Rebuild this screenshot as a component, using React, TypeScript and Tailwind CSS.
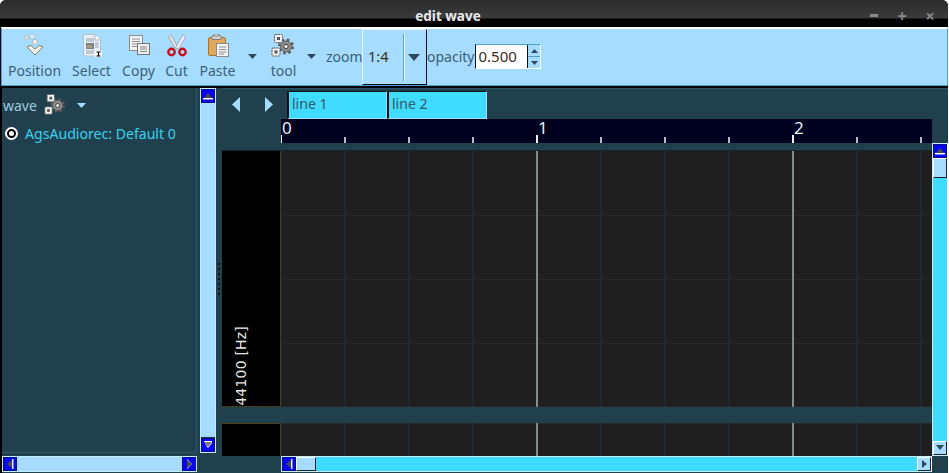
import React from 'react';

const font = { fontFamily: '"Noto Sans", sans-serif' };

function GearsIcon({ size = 24 }: { size?: number }) {
  return (
    <svg width={size} height={size} viewBox="0 0 24 24">
      <circle cx="16" cy="12.5" r="6.5" fill="none" stroke="#5c5c5c" strokeWidth="3" strokeDasharray="2.6 2.5" />
      <circle cx="16" cy="12.5" r="5.5" fill="#8d8d8d" stroke="#606060" />
      <circle cx="16" cy="12.5" r="2.2" fill="#e6e6e6" stroke="#3f3f3f" />
      <rect x="4.5" y="0.5" width="8" height="8" rx="1" fill="#f2f2f2" stroke="#555" strokeDasharray="2 0.8" />
      <rect x="7" y="3" width="3" height="3" fill="#555" />
      <rect x="2" y="14" width="8" height="8" rx="1" fill="#f2f2f2" stroke="#555" strokeDasharray="2 0.8" />
      <rect x="4.5" y="16.5" width="3" height="3" fill="#555" />
    </svg>
  );
}

function PositionIcon() {
  return (
    <svg width="24" height="24" viewBox="0 0 24 24">
      <circle cx="3.5" cy="4" r="2" fill="#e4e4e4" stroke="#a9b4b8" strokeWidth="0.7" />
      <circle cx="9" cy="2.5" r="2.2" fill="#f3f3f3" stroke="#a9b4b8" strokeWidth="0.7" />
      <circle cx="12" cy="8" r="2.6" fill="#eee" stroke="#9aa6aa" strokeWidth="0.7" />
      <path d="M4 13 L8 11.5 L12 15 L16 11.5 L20 13 L12 21 Z" fill="#f2f2ea" stroke="#7b7f70" strokeWidth="1" strokeLinejoin="round" />
    </svg>
  );
}

function SelectIcon() {
  return (
    <svg width="24" height="24" viewBox="0 0 24 24">
      <path d="M3.5 0.5 H15 L20.5 6 V22 H3.5 Z" fill="#eaf0f6" stroke="#b5bfc9" />
      <path d="M15 0.5 V6 H20.5" fill="#fff" stroke="#aab4be" />
      <rect x="6" y="9" width="8" height="6" fill="#77808a" />
      <rect x="7" y="11" width="5" height="3" fill="#a99f7b" />
      <path d="M6 5h8M6 7h8M15 9h3.5M15 11h3.5M15 13h3.5M6 17h8M6 19h8" stroke="#96a1ac" strokeWidth="1" />
      <rect x="15" y="17" width="7" height="6" fill="#fff" />
      <path d="M16.5 18h4M18.5 18v4M16.5 22h4" stroke="#000" strokeWidth="1.2" />
    </svg>
  );
}

function CopyIcon() {
  return (
    <svg width="24" height="24" viewBox="0 0 24 24">
      <rect x="2.5" y="1.5" width="13" height="15" fill="#f4f4f4" stroke="#8b8b8b" />
      <path d="M5 5h8M5 7.5h8M5 10h8M5 12.5h5" stroke="#8e8e8e" />
      <rect x="10.5" y="9.5" width="12" height="11" fill="#eeeeee" stroke="#777" />
      <path d="M13 13h7M13 15h7M13 17.5h7" stroke="#8a8a8a" />
    </svg>
  );
}

function CutIcon() {
  return (
    <svg width="24" height="24" viewBox="0 0 24 24">
      <path d="M6 0.5 L13.5 14 L10.5 15 L3.5 3 Z" fill="#dfe3e5" stroke="#9b9b9b" strokeWidth="0.8" />
      <path d="M18 0.5 L10.5 14 L13.5 15 L20.5 3 Z" fill="#eef0f1" stroke="#9b9b9b" strokeWidth="0.8" />
      <circle cx="6.5" cy="18" r="3.2" fill="none" stroke="#c8101c" strokeWidth="2.4" />
      <circle cx="17.5" cy="18" r="3.2" fill="none" stroke="#c8101c" strokeWidth="2.4" />
    </svg>
  );
}

function PasteIcon() {
  return (
    <svg width="24" height="24" viewBox="0 0 24 24">
      <rect x="2.5" y="3.5" width="17" height="18" rx="1.5" fill="#dfa95e" stroke="#a3752e" />
      <rect x="6" y="1.5" width="9" height="4" rx="1" fill="#d8d8d8" stroke="#777" />
      <rect x="8.5" y="0" width="4" height="2.5" fill="#cfcfcf" stroke="#777" strokeWidth="0.6" />
      <rect x="10.5" y="9.5" width="12" height="13" fill="#f3f3f3" stroke="#8a8a8a" />
      <path d="M13 13h7.5M13 15.5h7.5M13 18h7.5M13 20h5" stroke="#8e8e8e" />
    </svg>
  );
}

// little triangle used by the drop downs and the nav buttons
function Tri({ dir, color, w = 10, h = 6 }: { dir: 'up' | 'down' | 'left' | 'right'; color: string; w?: number; h?: number }) {
  const points = {
    up: `0,${h} ${w},${h} ${w / 2},0`,
    down: `0,0 ${w},0 ${w / 2},${h}`,
    left: `${w},0 ${w},${h} 0,${h / 2}`,
    right: `0,0 0,${h} ${w},${h / 2}`,
  }[dir];
  return (
    <svg width={w} height={h} viewBox={`0 0 ${w} ${h}`} className="block shrink-0">
      <polygon points={points} fill={color} />
    </svg>
  );
}

// scroll arrows have a dark face and a white edge
function ScrollArrow({ dir, light }: { dir: 'up' | 'down' | 'left' | 'right'; light?: boolean }) {
  const face = light ? '#2d4a5c' : '#4a4a4a';
  const horizontal = dir === 'left' || dir === 'right';
  const faces = {
    up: '1,6 9,6 5,1',
    down: '1,1 9,1 5,6',
    left: '6,1 6,9 1,5',
    right: '2,1 2,9 7,5',
  }[dir];
  return (
    <svg width={horizontal ? 8 : 10} height={horizontal ? 10 : 8} viewBox={horizontal ? '0 0 8 10' : '0 0 10 8'} className="block">
      {dir === 'up' && <rect x="0" y="6" width="10" height="1.5" fill="#fff" />}
      {dir === 'down' && !light && <polygon points="1,0 9,0 9,2 5,7 4,6" fill="#fff" />}
      {dir === 'left' && <rect x="6" y="0" width="1.5" height="10" fill="#d8e8f0" />}
      {dir === 'right' && !light && <polygon points="2,0 7,5 2,10" fill="#d8e8f0" />}
      <polygon points={faces} fill={dir === 'down' && !light ? '#777' : face} />
    </svg>
  );
}

function ToolButton({ label, icon, className }: { label: string; icon: React.ReactNode; className: string }) {
  return (
    <div className={`flex flex-col items-center ${className}`}>
      <div className="h-[24px] mt-[5px]">{icon}</div>
      <span className="mt-[3px] text-[14px] leading-[19px] text-[#3d5f74] whitespace-nowrap">{label}</span>
    </div>
  );
}

function ScrollButton({ dir, light }: { dir: 'up' | 'down' | 'left' | 'right'; light?: boolean }) {
  return (
    <div
      className={`flex items-center justify-center shrink-0 w-[14px] h-[14px] ${
        light ? 'bg-[#a6dcff] border border-white border-b-[#222] border-r-[#222]' : 'bg-[#0808f0] border border-[#0a0a8a]'
      }`}
    >
      <ScrollArrow dir={dir} light={light} />
    </div>
  );
}

function RulerTicks() {
  const ticks = Array.from({ length: 11 }, (_, i) => i * 64);
  return (
    <svg width="651" height="8" className="block">
      {ticks.map((x) => (
        <rect key={x} x={x - 1} y={x % 256 === 0 ? 0 : 2} width="2" height={x % 256 === 0 ? 8 : 6} fill={x % 256 === 0 ? '#f0f0f0' : '#b9b9c4'} />
      ))}
    </svg>
  );
}

function WaveGrid({ height, rows }: { height: number; rows: number[] }) {
  const lines = Array.from({ length: 11 }, (_, i) => i * 64);
  return (
    <svg width="651" height={height} className="block bg-[#1f1f1f]">
      {rows.map((y) => (
        <rect key={y} x="0" y={y} width="651" height="1" fill="#282828" />
      ))}
      {lines.map((x) => (
        <rect key={x} x={x - 1} y="0" width="2" height={height} fill={x % 256 === 0 ? (x === 0 ? '#1c2a30' : '#7f8c87') : '#1c2b33'} />
      ))}
    </svg>
  );
}

export default function App() {
  return (
    <div style={font} className="w-[949px] h-[473px] bg-white overflow-hidden">
      <div className="w-[948px] h-[473px] bg-black rounded-t-[6px] overflow-hidden flex flex-col">
        {/* Title bar */}
        <div className="h-[27px] shrink-0 grid grid-cols-[1fr_auto_1fr] bg-[linear-gradient(#2b2b2b_0,#3b3b3b_18px,#000_19px)]">
          <div />
          <span className="mr-[52px] text-[13.5px] leading-[32px] h-[27px] font-bold text-[#e8e8e8]">edit wave</span>
          <div className="flex justify-end items-start gap-[20px] pr-[14px] pt-[11px]">
            <div className="w-[8px] h-[3px] mt-[3px] bg-[#8a8a8a]" />
            <div className="w-[8px] h-[9px] flex items-center justify-center text-[16px] leading-none font-bold text-[#8a8a8a]">+</div>
            <div className="w-[8px] h-[9px] flex items-center justify-center text-[16px] leading-none font-bold text-[#8a8a8a]">×</div>
          </div>
        </div>

        {/* Toolbar */}
        <div className="h-[59px] shrink-0 ml-[1px] flex bg-[#a6dcff] border-t-2 border-t-white border-b border-b-[#4d9fd0] border-l border-l-[#4d9fd0] border-r border-r-[#4d9fd0]">
          <ToolButton label="Position" icon={<PositionIcon />} className="ml-[6px] w-[53px]" />
          <ToolButton label="Select" icon={<SelectIcon />} className="ml-[10px] w-[41px]" />
          <ToolButton label="Copy" icon={<CopyIcon />} className="ml-[10px] w-[33px]" />
          <ToolButton label="Cut" icon={<CutIcon />} className="ml-[10px] w-[23px]" />
          <ToolButton label="Paste" icon={<PasteIcon />} className="ml-[11px] w-[37px]" />
          <div className="ml-[12px] mt-[25px]">
            <Tri dir="down" color="#2d4a5c" w={9} h={5} />
          </div>
          <ToolButton
            label="tool"
            icon={
              <div className="mr-[3px]">
                <GearsIcon />
              </div>
            }
            className="ml-[14px] w-[25px]"
          />
          <div className="ml-[11px] mt-[25px]">
            <Tri dir="down" color="#2d4a5c" w={9} h={5} />
          </div>
          <span className="ml-[10px] mt-[18px] w-[35px] text-[14px] leading-[19px] text-[#3d5f74]">zoom</span>
          <div className="ml-[1px] w-[65px] h-[56px] flex items-center border border-[#e6f5ff] border-r-[#111] border-b-[#111]">
            <span className="ml-[5px] w-[35px] text-[14.5px] text-[#3a2d1e]">1:4</span>
            <div className="w-[2px] h-[47px] bg-[#e8f6ff] border-l border-l-[#5aa7d6]" />
            <div className="ml-[3px]">
              <Tri dir="down" color="#2d4a5c" w={12} h={7} />
            </div>
          </div>
          <span className="mt-[18px] text-[14px] leading-[19px] text-[#3d5f74]">opacity</span>
          <div className="ml-[1px] mt-[15px] w-[66px] h-[25px] flex border border-white border-t-[#4d9fd0] border-l-[#111]">
            <span className="w-[51px] bg-white pl-[2px] text-[15px] leading-[23px] text-[#3a2d1e]">0.500</span>
            <div className="w-[13px] flex flex-col border-l border-l-[#111]">
              <div className="h-[12px] flex items-center justify-center border-b border-b-[#4d9fd0]">
                <Tri dir="up" color="#2d4a5c" w={7} h={4} />
              </div>
              <div className="flex-1 flex items-center justify-center">
                <Tri dir="down" color="#2d4a5c" w={7} h={4} />
              </div>
            </div>
          </div>
        </div>

        <div className="h-[2px] shrink-0" />

        {/* Main area */}
        <div className="flex-1 min-h-0 ml-[2px] flex bg-[#20404e]">
          {/* Left side */}
          <div className="w-[220px] shrink-0 flex flex-col">
            <div className="h-[365px] flex">
              <div className="w-[195px] border-r border-b border-[#2a5567] pt-[5px]">
                <div className="flex items-center h-[24px] pl-[1px] text-[14px] text-[#9fcbe0]">
                  <span>wave</span>
                  <div className="ml-[6px]">
                    <GearsIcon size={22} />
                  </div>
                  <div className="ml-[12px]">
                    <Tri dir="down" color="#a6dcff" w={9} h={5} />
                  </div>
                </div>
                <div className="mt-[7px] flex items-center pl-[3px]">
                  <div className="w-[13px] h-[13px] rounded-full bg-black border-2 border-white flex items-center justify-center">
                    <div className="w-[5px] h-[5px] rounded-full bg-white" />
                  </div>
                  <span className="ml-[7px] text-[14.1px] leading-[19px] text-[#3bd0ee]">AgsAudiorec: Default 0</span>
                </div>
              </div>
              {/* Vertical scrollbar */}
              <div className="ml-[3px] w-[16px] h-[365px] flex flex-col border border-[#c4eeff] bg-[#a6dcff]">
                <ScrollButton dir="up" />
                <div className="flex-1 border-b border-b-[#1b3542]" />
                <ScrollButton dir="down" />
              </div>
              <div className="w-[6px] flex flex-col items-center justify-center gap-[3px] pt-[16px]">
                {Array.from({ length: 7 }, (_, i) => (
                  <div key={i} className="w-[2px] h-[2px] bg-[#08141a]" />
                ))}
              </div>
            </div>
            {/* Horizontal scrollbar */}
            <div className="mt-[3px] w-[195px] h-[16px] flex bg-[#a6dcff] border border-[#c4eeff]">
              <ScrollButton dir="left" />
              <div className="flex-1" />
              <ScrollButton dir="right" />
            </div>
          </div>

          {/* Right side */}
          <div className="flex-1 min-w-0 flex flex-col">
            <div className="h-[31px] shrink-0 flex items-center border-t border-[#2a5567]">
              <div className="w-[65px] flex items-center pl-[10px] gap-[25px]">
                <Tri dir="left" color="#a6dcff" w={8} h={15} />
                <Tri dir="right" color="#a6dcff" w={8} h={15} />
              </div>
              <div className="w-[100px] h-[28px] mt-[1px] bg-[#3fdcff] border border-[#a6dcff] border-l-2 border-l-[#111] border-t-[#111] text-[14px] leading-[24px] pl-[3px] text-[#34566a]">line 1</div>
              <div className="w-[100px] h-[28px] mt-[1px] bg-[#3fdcff] border border-[#a6dcff] border-l-2 border-l-[#111] border-t-[#111] text-[14px] leading-[24px] pl-[3px] text-[#34566a]">line 2</div>
            </div>
            {/* Ruler */}
            <div className="h-[24px] shrink-0 flex">
              <div className="w-[59px]" />
              <div className="w-[651px] bg-[#00001f] flex flex-col">
                <div className="h-[16px] flex text-[17px] leading-[18px] text-[#e8eef5]">
                  <span className="w-[256px] pl-[1px]">0</span>
                  <span className="w-[256px] pl-[1px]">1</span>
                  <span className="flex-1 pl-[1px]">2</span>
                </div>
                <RulerTicks />
              </div>
            </div>
            <div className="flex-1 min-h-0 flex">
              <div className="w-[710px] flex flex-col">
                <div className="h-[8px] border-b border-b-[#15242c]" />
                <div className="h-[256px] flex">
                  <div className="w-[59px] bg-black border-b border-r border-[#4a3c16] flex items-end">
                    <span className="ml-[11px] pb-[2px] [writing-mode:vertical-rl] rotate-180 font-['DejaVu_Sans'] text-[14px] leading-[17px] tracking-[0.2px] text-[#e6e6e6] whitespace-nowrap">44100 [Hz]</span>
                  </div>
                  <WaveGrid height={256} rows={[64, 128, 192, 255]} />
                </div>
                <div className="h-[16px]" />
                <div className="h-[33px] flex">
                  <div className="w-[59px] bg-black border-r border-t border-[#4a3c16]" />
                  <WaveGrid height={33} rows={[0]} />
                </div>
                {/* Horizontal scrollbar */}
                <div className="h-[16px] flex bg-[#3fdcff] border border-[#c4eeff] border-r-white ml-[59px] w-[651px]">
                  <ScrollButton dir="left" />
                  <div className="w-[20px] bg-[#a6dcff] border border-white border-b-[#222] border-r-[#222]" />
                  <div className="flex-1" />
                  <ScrollButton dir="right" light />
                </div>
              </div>
              {/* Vertical scrollbar */}
              <div className="w-[16px] h-[313px] flex flex-col bg-[#3fdcff] border border-[#c4eeff] border-r-white">
                <ScrollButton dir="up" />
                <div className="h-[20px] bg-[#a6dcff] border border-white border-b-[#222] border-r-[#222]" />
                <div className="flex-1" />
                <ScrollButton dir="down" light />
              </div>
            </div>
          </div>
        </div>
      </div>
    </div>
  );
}
